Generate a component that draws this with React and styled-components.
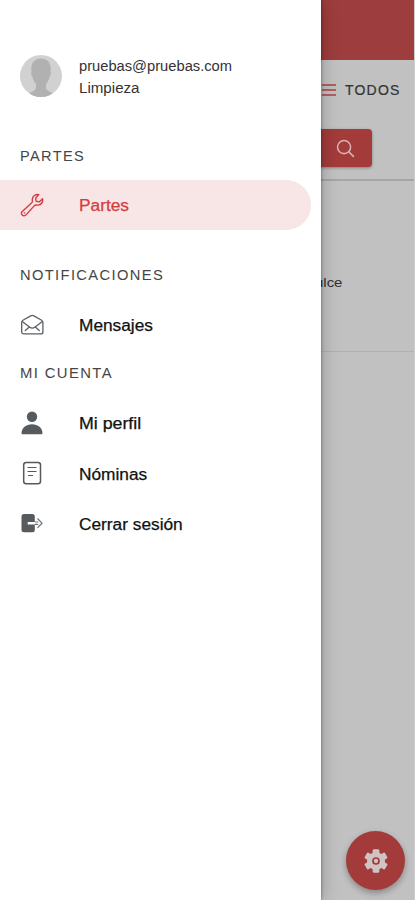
import React from 'react';
import styled, { createGlobalStyle } from 'styled-components';

const GlobalStyle = createGlobalStyle`
  * {
    box-sizing: border-box;
  }
  body {
    margin: 0;
    background: #c1c1c1;
    font-family: 'Liberation Sans', Arial, sans-serif;
  }
`;

const Screen = styled.div`
  position: relative;
  display: flex;
  flex-direction: column;
  width: 415px;
  height: 900px;
  overflow: hidden;
  background: #c1c1c1;
  border-right: 1px solid #cccccc;
`;

const TopBar = styled.header`
  flex: none;
  height: 60px;
  background: #9e3d3d;
`;

const Filters = styled.div`
  flex: none;
  height: 121px;
  display: flex;
  flex-direction: column;
  border-bottom: 2px solid #a6a6a6;
`;

const FilterTab = styled.div`
  display: flex;
  align-items: center;
  gap: 9px;
  height: 59px;
  padding-left: 322px;
  color: #333;
  font-size: 14px;
  letter-spacing: 1.2px;
  -webkit-text-stroke: 0.2px;
`;

const SearchButton = styled.button`
  display: flex;
  align-items: center;
  justify-content: flex-end;
  width: 72px;
  height: 38px;
  margin: 10px 0 0 300px;
  padding: 0 17px 0 0;
  border: none;
  border-radius: 4px;
  background: #a33b3b;
  box-shadow: 0 1px 3px rgba(0, 0, 0, 0.35);
`;

const ListRow = styled.div`
  flex: none;
  height: 171px;
  padding: 94px 0 0 315px;
  border-bottom: 1px solid #b0b0b0;
  color: #333;
  font-size: 13px;
  line-height: 16px;
`;

const Fab = styled.button`
  position: absolute;
  right: 9px;
  bottom: 10px;
  display: flex;
  align-items: center;
  justify-content: center;
  width: 59px;
  height: 59px;
  padding: 0;
  border: none;
  border-radius: 50%;
  background: #a33b3b;
  box-shadow: 0 3px 6px rgba(0, 0, 0, 0.3);
`;

const Drawer = styled.aside`
  position: absolute;
  top: 0;
  left: 0;
  width: 321px;
  height: 900px;
  padding-top: 54px;
  background: #fff;
  box-shadow: 0 0 3px rgba(0, 0, 0, 0.45), 2px 0 16px rgba(0, 0, 0, 0.2);
`;

const Profile = styled.div`
  display: flex;
  align-items: center;
  gap: 17px;
  height: 44px;
  padding-left: 20px;
`;

const ProfileText = styled.div`
  padding-top: 1px;
  color: #333;
  font-size: 14px;
  line-height: 22px;
`;

// the face is drawn a little wider than the regular cut
const WideText = styled.span`
  display: block;
  width: max-content;
  transform: scaleX(${(props) => props.$scale || 1.08});
  transform-origin: left center;
`;

const SectionTitle = styled.h2`
  display: flex;
  align-items: center;
  height: 20px;
  margin: ${(props) => props.$margin};
  padding-left: 20px;
  color: #454545;
  font-size: 14px;
  font-weight: 400;
  letter-spacing: 1.3px;
`;

const MenuItem = styled.a`
  display: flex;
  align-items: center;
  gap: 34px;
  width: 311px;
  height: 50.2px;
  padding-left: 20px;
  border-radius: 0 25px 25px 0;
  background: ${(props) => (props.$active ? '#f8e5e5' : 'transparent')};
  color: ${(props) => (props.$active ? '#d53c42' : '#111')};
  font-size: 16px;
  -webkit-text-stroke: 0.25px;

  svg {
    flex: none;
  }

  ${WideText} {
    padding-top: 2px;
  }
`;

const AvatarIcon = () => (
  <svg width="42" height="42" viewBox="0 0 42 42">
    <defs>
      <clipPath id="avatar">
        <circle cx="21" cy="21" r="21" />
      </clipPath>
    </defs>
    <circle cx="21" cy="21" r="21" fill="#d1d1d1" />
    <path
      clipPath="url(#avatar)"
      fill="#b1b1b1"
      d="M21 3.500c-6 0-9.700 4-9.700 9.700 0 1.400.2 2.600.2 4-.8.8-.4 3 .9 4.200.6 3.600 2 6 3.600 7.700V33c-.6 2.800-4.600 4-8 5.800V43h26v-4.200c-3.400-1.800-7.400-3-8-5.800v-3.900c1.600-1.700 3-4.100 3.600-7.700 1.300-1.200 1.700-3.400.9-4.200 0-1.400.2-2.600.2-4 0-5.700-3.700-9.700-9.700-9.700z"
    />
  </svg>
);

const WrenchIcon = () => (
  <svg width="25" height="25" viewBox="0 0 25 25" fill="none" stroke="currentColor" strokeWidth="1.400" strokeLinejoin="round">
    <path d="M18.800 1.600c-3.300-.6-6.300 1.500-6.500 4.600-.1 1.100.2 1.800.1 2.500-.1.600-.4.900-.9 1.400l-9 8.100c-1.200 1.100-1.300 2.700-.3 3.800 1.100 1.100 2.800 1.100 3.800-.1l8.200-9c.5-.5.800-.8 1.400-.9.700-.1 1.500.2 2.600.1 3.200-.3 5-3.200 4.300-6.300l-3.300 3.100-3-.6-.6-3.100z" />
    <circle cx="4.500" cy="19.900" r=".6" strokeWidth=".7" />
  </svg>
);

const MailIcon = () => (
  <svg width="25" height="25" viewBox="0 0 25 25" fill="none" stroke="#5c6063" strokeWidth="1.300" strokeLinejoin="round" strokeLinecap="round">
    <path d="M1.700 9.300c0-1 .4-1.600 1.200-2.100l7.800-4.300c1.100-.6 2.100-.6 3.200 0l7.800 4.300c.8.500 1.200 1.100 1.200 2.100v9.600c0 1.200-.8 2-2 2H3.700c-1.200 0-2-.8-2-2z" />
    <path d="M2.600 8.700l7.200 5.500c1.700 1.300 3.300 1.300 5 0L22 8.700M5.300 17.500l4-3.600M19.300 17.500l-4-3.600" />
  </svg>
);

const PersonIcon = () => (
  <svg width="25" height="25" viewBox="0 0 25 25" fill="#575b5e">
    <circle cx="12" cy="5.700" r="5.200" />
    <path d="M1.500 22.200c.2-5.500 4.500-9 10.500-9s10.300 3.500 10.500 9c0 .7-.3 1-.9 1H2.400c-.6 0-.9-.3-.9-1z" />
  </svg>
);

const NoteIcon = () => (
  <svg width="25" height="25" viewBox="0 0 25 25" fill="none" stroke="#55595c">
    <rect x="3.700" y="1.600" width="16.800" height="21.200" rx="2.500" strokeWidth="1.500" />
    <path d="M7.500 6.500h9M7.500 10.500h9M8 14.500h5" strokeWidth="1.200" />
  </svg>
);

const LogoutIcon = () => (
  <svg width="25" height="25" viewBox="0 0 25 25">
    <path fill="#575b5e" d="M4.500 3h7.800a2.500 2.500 0 0 1 2.500 2.500V11H7.700v2.400h7.100v5.300a2.500 2.500 0 0 1-2.500 2.500H4A2.500 2.500 0 0 1 1.500 18.700V5.500A2.500 2.500 0 0 1 4 3z" />
    <path fill="none" stroke="#6c7073" strokeWidth="1.200" d="M14.800 11h3.500M14.800 13.400h3.500M17.500 7.500l4.500 4.700-4.500 4.700" />
  </svg>
);

const BarsIcon = () => (
  <svg width="14" height="14" viewBox="0 0 14 14" stroke="#aa4045" strokeWidth="1.700">
    <path d="M0 2h14M0 7h14M0 12h14" />
  </svg>
);

const SearchIcon = () => (
  <svg width="19" height="19" viewBox="0 0 20 20" fill="none" stroke="#d8b4b4" strokeWidth="1.600" strokeLinecap="round">
    <circle cx="8.500" cy="8.500" r="6.900" />
    <path d="M13.500 13.500l4.800 4.800" />
  </svg>
);

const GearIcon = () => (
  <svg width="24" height="24" viewBox="0 0 24 24">
    <g fill="#cfc3c3">
      <circle cx="12" cy="12" r="9" />
      {[0, 60, 120].map((angle) => (
        <rect key={angle} x="8.700" y=".2" width="6.600" height="23.600" rx="1.200" transform={`rotate(${angle} 12 12)`} />
      ))}
    </g>
    <circle cx="12" cy="12" r="3" fill="#cfc3c3" stroke="#a33b3b" strokeWidth="1.700" />
  </svg>
);

const App = () => {
  return (
    <>
      <GlobalStyle />
      <Screen>
        <TopBar />
        <Filters>
          <FilterTab>
            <BarsIcon />
            TODOS
          </FilterTab>
          <SearchButton aria-label="Buscar">
            <SearchIcon />
          </SearchButton>
        </Filters>
        <ListRow>
          <WideText $scale={1.15}>ulce</WideText>
        </ListRow>
        <Fab aria-label="Ajustes">
          <GearIcon />
        </Fab>

        <Drawer>
          <Profile>
            <AvatarIcon />
            <ProfileText>
              <WideText $scale={1.05}>pruebas@pruebas.com</WideText>
              <WideText>Limpieza</WideText>
            </ProfileText>
          </Profile>

          <SectionTitle $margin="48px 0 14px">
            <WideText $scale={1.04}>PARTES</WideText>
          </SectionTitle>
          <MenuItem $active>
            <WrenchIcon />
            <WideText>Partes</WideText>
          </MenuItem>

          <SectionTitle $margin="35px 0 15px">
            <WideText $scale={1.05}>NOTIFICACIONES</WideText>
          </SectionTitle>
          <MenuItem>
            <MailIcon />
            <WideText>Mensajes</WideText>
          </MenuItem>

          <SectionTitle $margin="13px 0 15px">
            <WideText $scale={1.06}>MI CUENTA</WideText>
          </SectionTitle>
          <MenuItem>
            <PersonIcon />
            <WideText $scale={1.11}>Mi perfil</WideText>
          </MenuItem>
          <MenuItem>
            <NoteIcon />
            <WideText>Nóminas</WideText>
          </MenuItem>
          <MenuItem>
            <LogoutIcon />
            <WideText>Cerrar sesión</WideText>
          </MenuItem>
        </Drawer>
      </Screen>
    </>
  );
};

export default App;
